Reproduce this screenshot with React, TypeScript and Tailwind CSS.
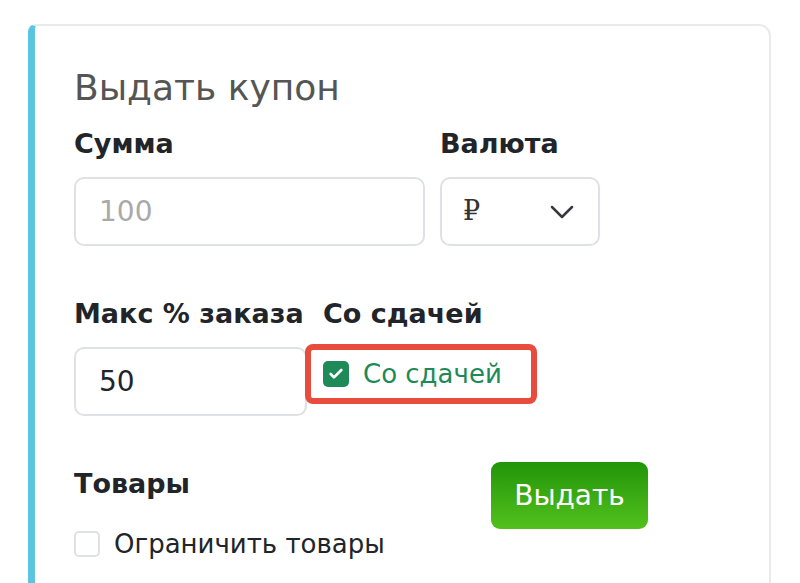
import React from 'react';
import { ChevronDown, Check } from 'lucide-react';

const font = { fontFamily: '"DejaVu Sans", Verdana, sans-serif' };

const Label: React.FC<{ children: React.ReactNode; className?: string }> = ({ children, className = '' }) => (
  <div className={`h-[40px] whitespace-nowrap text-[27px] leading-[40px] font-bold text-[#212529] ${className}`}>
    {children}
  </div>
);

export default function App() {
  return (
    <div className="h-[583px] w-[800px] overflow-hidden bg-white" style={font}>
      <div className="pt-[24px] pl-[28px]">
        {/* Card */}
        <div className="h-[600px] w-[743px] rounded-tl-[8px] rounded-tr-[12px] border-2 border-l-[7px] border-[#e9eaec] border-l-[#5bc4e0] pl-[39px] pt-[38px]">
          <h2 className="text-[36px] leading-[48px] font-normal text-[#555]">Выдать купон</h2>

          {/* Сумма + Валюта */}
          <div className="mt-[12px] flex gap-[15px]">
            <div className="w-[351px]">
              <Label>Сумма</Label>
              <div className="mt-[13px] flex h-[69px] items-center rounded-[10px] border-2 border-[#dee1e5] px-[23px] text-[28px] text-[#a9a9a9]">
                100
              </div>
            </div>
            <div className="w-[160px]">
              <Label>Валюта</Label>
              <div className="mt-[13px] flex h-[69px] items-center justify-between rounded-[10px] border-2 border-[#dee1e5] pl-[21px] pr-[16px] text-[#333]">
                <span className="text-[27px]" style={{ fontFamily: '"DejaVu Serif", serif' }}>₽</span>
                <ChevronDown size={40} strokeWidth={1.5} className="text-[#343a40]" />
              </div>
            </div>
          </div>

          {/* Макс % заказа + Со сдачей */}
          <div className="mt-[48px] flex gap-[16px]">
            <div className="w-[233px]">
              <Label>Макс % заказа</Label>
              <div className="mt-[13px] flex h-[69px] items-center rounded-[10px] border-2 border-[#dee1e5] px-[23px] text-[28px] text-[#212529]">
                50
              </div>
            </div>
            <div>
              <Label>Со сдачей</Label>
              <div className="-ml-[18px] mt-[10px] flex h-[60px] w-[232px] items-center gap-[14px] rounded-[8px] border-[6px] border-[#e84c3d] pl-[12px]">
                <span className="flex h-[26px] w-[26px] items-center justify-center rounded-[5px] bg-[#1e8a57]">
                  <Check size={16} strokeWidth={4} className="text-white" />
                </span>
                <span className="text-[26px] text-[#1e8a57]">Со сдачей</span>
              </div>
            </div>
          </div>

          {/* Товары + button */}
          <div className="mt-[48px] flex items-start">
            <div className="w-[417px]">
              <Label>Товары</Label>
              <div className="mt-[23px] flex h-[34px] items-center gap-[14px]">
                <span className="h-[26px] w-[26px] rounded-[5px] border-2 border-[#dee1e5]" />
                <span className="text-[26px] text-[#212529]">Ограничить товары</span>
              </div>
            </div>
            <button className="-mt-[2px] h-[67px] w-[157px] rounded-[9px] bg-gradient-to-b from-[#1f9508] to-[#52c11d] text-[28px] text-white">
              Выдать
            </button>
          </div>
        </div>
      </div>
    </div>
  );
}
